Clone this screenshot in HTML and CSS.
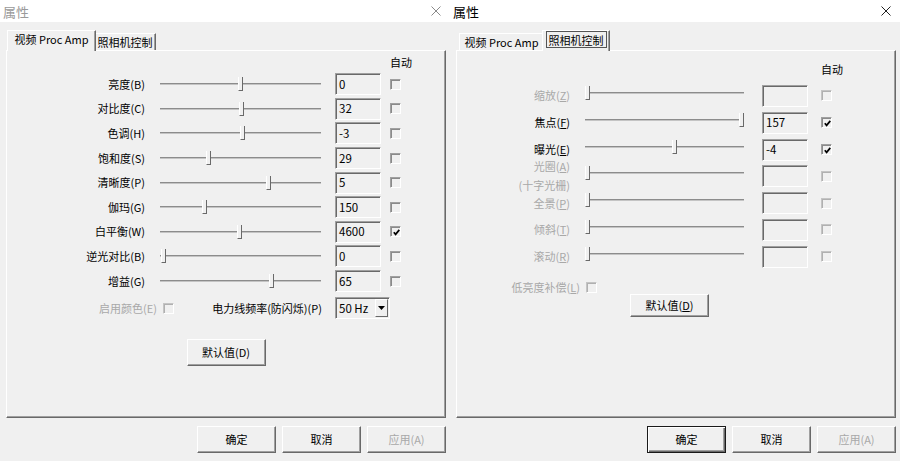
FILE: index.html
```html
<!DOCTYPE html>
<html lang="zh-CN">
<head>
    <meta charset="UTF-8">
    <meta name="viewport" content="width=device-width, initial-scale=1.0">
    <title>属性</title>
    <link rel="stylesheet" href="styles.css">
</head>
<body>
    <!-- 视频 Proc Amp page (inactive window) -->
    <div class="dialog video inactive">
        <div class="titlebar">
            <span class="title">属性</span>
            <svg class="close" width="10" height="10" viewBox="0 0 10 10"><path d="M0.5 0.5L9.5 9.5M9.5 0.5L0.5 9.5"/></svg>
        </div>
        <div class="tabs">
            <div class="tab tab-video selected">视频 Proc Amp</div>
            <div class="tab tab-camera">照相机控制</div>
        </div>
        <div class="panel">
            <div class="auto-head">自动</div>
            <div class="row">
                <span class="label">亮度(B)</span>
                <div class="slider"><span class="thumb" style="left:78px"></span></div>
                <div class="edit">0</div>
                <span class="check"></span>
            </div>
            <div class="row">
                <span class="label">对比度(C)</span>
                <div class="slider"><span class="thumb" style="left:79px"></span></div>
                <div class="edit">32</div>
                <span class="check"></span>
            </div>
            <div class="row">
                <span class="label">色调(H)</span>
                <div class="slider"><span class="thumb" style="left:80px"></span></div>
                <div class="edit">-3</div>
                <span class="check"></span>
            </div>
            <div class="row">
                <span class="label">饱和度(S)</span>
                <div class="slider"><span class="thumb" style="left:46px"></span></div>
                <div class="edit">29</div>
                <span class="check"></span>
            </div>
            <div class="row">
                <span class="label">清晰度(P)</span>
                <div class="slider"><span class="thumb" style="left:106px"></span></div>
                <div class="edit">5</div>
                <span class="check"></span>
            </div>
            <div class="row">
                <span class="label">伽玛(G)</span>
                <div class="slider"><span class="thumb" style="left:42px"></span></div>
                <div class="edit">150</div>
                <span class="check"></span>
            </div>
            <div class="row">
                <span class="label">白平衡(W)</span>
                <div class="slider"><span class="thumb" style="left:77px"></span></div>
                <div class="edit">4600</div>
                <span class="check on"><svg viewBox="0 0 7 7"><path d="M0.8 3.2L2.6 5.4L6.3 0.9"/></svg></span>
            </div>
            <div class="row">
                <span class="label">逆光对比(B)</span>
                <div class="slider"><span class="thumb" style="left:1px"></span></div>
                <div class="edit">0</div>
                <span class="check"></span>
            </div>
            <div class="row">
                <span class="label">增益(G)</span>
                <div class="slider"><span class="thumb" style="left:109px"></span></div>
                <div class="edit">65</div>
                <span class="check"></span>
            </div>
            <div class="row misc">
                <span class="label label-a off">启用颜色(E)</span>
                <span class="check off"></span>
                <span class="label label-b">电力线频率(防闪烁)(P)</span>
                <div class="combo">
                    <span>50 Hz</span>
                    <span class="drop"><svg width="7" height="4" viewBox="0 0 7 4"><path d="M0 0H7L3.5 4Z"/></svg></span>
                </div>
            </div>
            <div class="btn defaults">默认值(D)</div>
        </div>
        <div class="actions">
            <div class="btn">确定</div>
            <div class="btn">取消</div>
            <div class="btn off">应用(A)</div>
        </div>
    </div>

    <!-- 照相机控制 page (active window) -->
    <div class="dialog camera">
        <div class="titlebar">
            <span class="title">属性</span>
            <svg class="close" width="10" height="10" viewBox="0 0 10 10"><path d="M0.5 0.5L9.5 9.5M9.5 0.5L0.5 9.5"/></svg>
        </div>
        <div class="tabs">
            <div class="tab tab-video">视频 Proc Amp</div>
            <div class="tab tab-camera selected"><span class="focus">照相机控制</span></div>
        </div>
        <div class="panel">
            <div class="auto-head">自动</div>
            <div class="row">
                <span class="label off">缩放(<u>Z</u>)</span>
                <div class="slider"><span class="thumb" style="left:0px"></span></div>
                <div class="edit"></div>
                <span class="check off"></span>
            </div>
            <div class="row">
                <span class="label">焦点(<u>F</u>)</span>
                <div class="slider"><span class="thumb" style="left:154px"></span></div>
                <div class="edit">157</div>
                <span class="check on"><svg viewBox="0 0 7 7"><path d="M0.8 3.2L2.6 5.4L6.3 0.9"/></svg></span>
            </div>
            <div class="row">
                <span class="label">曝光(<u>E</u>)</span>
                <div class="slider"><span class="thumb" style="left:87px"></span></div>
                <div class="edit">-4</div>
                <span class="check on"><svg viewBox="0 0 7 7"><path d="M0.8 3.2L2.6 5.4L6.3 0.9"/></svg></span>
            </div>
            <div class="row">
                <span class="label off two-line">光圈(<u>A</u>)<br>(十字光栅)</span>
                <div class="slider"><span class="thumb" style="left:0px"></span></div>
                <div class="edit"></div>
                <span class="check off"></span>
            </div>
            <div class="row">
                <span class="label off">全景(<u>P</u>)</span>
                <div class="slider"><span class="thumb" style="left:0px"></span></div>
                <div class="edit"></div>
                <span class="check off"></span>
            </div>
            <div class="row">
                <span class="label off">倾斜(<u>T</u>)</span>
                <div class="slider"><span class="thumb" style="left:0px"></span></div>
                <div class="edit"></div>
                <span class="check off"></span>
            </div>
            <div class="row">
                <span class="label off">滚动(<u>R</u>)</span>
                <div class="slider"><span class="thumb" style="left:0px"></span></div>
                <div class="edit"></div>
                <span class="check off"></span>
            </div>
            <div class="row misc">
                <span class="label off">低亮度补偿(<u>L</u>)</span>
                <span class="check off"></span>
            </div>
            <div class="btn defaults">默认值(<u>D</u>)</div>
        </div>
        <div class="actions">
            <div class="btn default">确定</div>
            <div class="btn">取消</div>
            <div class="btn off">应用(A)</div>
        </div>
    </div>
</body>
</html>
```

FILE: styles.css
```css
* {
    box-sizing: border-box;
}
body {
    margin: 0;
    display: flex;
    font-family: "Noto Sans CJK SC", "Liberation Sans", sans-serif;
    font-size: 11px;
    line-height: 13px;
    color: #000;
    background: #f0f0f0;
}
u {
    text-decoration-thickness: 1px;
    text-underline-offset: 1px;
}
.off {
    color: #a8a8a8;
}

/* window frame */
.dialog {
    width: 450px;
    height: 461px;
    background: #f0f0f0;
}
.titlebar {
    height: 22px;
    background: #fff;
    display: flex;
    align-items: center;
    justify-content: space-between;
    padding: 0 9px 0 3px;
}
.title {
    font-size: 13px;
}
.inactive .title {
    color: #9a9a9a;
}
.close {
    fill: none;
    stroke: #222;
    stroke-width: 1;
}
.inactive .close {
    stroke: #8a8a8a;
}

/* tab strip */
.tabs {
    height: 28px;
    display: flex;
    align-items: flex-end;
    padding-left: 9px;
    position: relative;
    z-index: 1;
}
.tab {
    height: 17px;
    border-top: 1px solid #fff;
    border-left: 1px solid #fff;
    border-right: 1px solid #696969;
    box-shadow: inset -1px 0 #a0a0a0;
    background: #f0f0f0;
    display: flex;
    align-items: center;
    justify-content: center;
    white-space: nowrap;
}
.tab-video {
    width: 85px;
}
.tab-camera {
    width: 62px;
}
.tab.selected {
    height: 21px;
    margin: 0 -2px -1px;
    position: relative;
    z-index: 2;
    padding-bottom: 3px;
}
.tab-video.selected {
    width: 89px;
}
.tab-camera.selected {
    width: 68px;
}
.focus {
    border: 1px solid #555;
    padding: 1px 2px 0;
    line-height: 14px;
}

/* page area */
.panel {
    margin-left: 6px;
    width: 440px;
    height: 368px;
    border-top: 1px solid #fff;
    border-left: 1px solid #fff;
    border-right: 1px solid #696969;
    border-bottom: 1px solid #696969;
    box-shadow: inset -1px -1px #a0a0a0;
}
.row {
    display: flex;
    align-items: center;
}
.label {
    text-align: right;
    white-space: nowrap;
}
.slider {
    position: relative;
    height: 2px;
    border-top: 1px solid #8c8c8c;
    border-bottom: 1px solid #c4c4c4;
}
.thumb {
    position: absolute;
    top: -7px;
    width: 5px;
    height: 14px;
    background: #f0f0f0;
    border-left: 1px solid #fff;
    border-right: 1px solid #696969;
    border-bottom: 1px solid #696969;
}
.edit {
    width: 46px;
    height: 22px;
    border: 1px solid;
    border-color: #a0a0a0 #fff #fff #a0a0a0;
    box-shadow: inset 1px 1px #696969;
    padding-left: 3px;
    display: flex;
    align-items: center;
    font-size: 11.5px;
}
.check {
    width: 11px;
    height: 11px;
    flex: none;
    border: 1px solid;
    border-color: #a0a0a0 #fff #fff #a0a0a0;
    box-shadow: inset 1px 1px #8a8a8a;
    display: flex;
    align-items: center;
    justify-content: center;
}
.check.off {
    border-color: #c4c4c4 #fff #fff #c4c4c4;
    box-shadow: inset 1px 1px #b0b0b0;
}
.check svg {
    width: 7px;
    height: 7px;
    margin: 1px 0 0 1px;
    fill: none;
    stroke: #000;
    stroke-width: 1.7;
}

/* buttons */
.btn {
    width: 79px;
    height: 27px;
    background: #f0f0f0;
    border: 1px solid;
    border-color: #fff #696969 #696969 #fff;
    box-shadow: inset -1px -1px #a0a0a0;
    display: flex;
    align-items: center;
    justify-content: center;
}
.btn.default {
    border-color: #1a1a1a;
    box-shadow: inset 1px 1px #fff, inset -1px -1px #696969, inset -2px -2px #a0a0a0;
}
.actions {
    display: flex;
    justify-content: flex-end;
    gap: 6px;
    padding: 8px 4px 0 0;
}

/* 视频 Proc Amp page */
.video .auto-head {
    height: 21px;
    padding: 5px 0 0 383px;
}
.video .row {
    height: 24.6px;
}
.video .label {
    width: 138px;
}
.video .slider {
    width: 161px;
    margin-left: 15px;
}
.video .edit {
    margin-left: 14px;
}
.video .check {
    margin-left: 9px;
}
.video .misc {
    height: 28px;
    margin-top: 1px;
}
.video .label-a {
    width: 150px;
}
.video .misc .check {
    margin-left: 6px;
}
.video .label-b {
    width: 148px;
}
.combo {
    margin-left: 13px;
    width: 55px;
    height: 22px;
    border: 1px solid;
    border-color: #a0a0a0 #fff #fff #a0a0a0;
    box-shadow: inset 1px 1px #696969;
    display: flex;
    align-items: center;
    padding: 0 1px 0 3px;
    font-size: 11.5px;
}
.drop {
    margin-left: auto;
    width: 13px;
    height: 18px;
    border: 1px solid;
    border-color: #fff #696969 #696969 #fff;
    display: flex;
    align-items: center;
    justify-content: center;
}
.drop svg {
    fill: #000;
}
.video .defaults {
    margin: 17px auto 0;
}

/* 照相机控制 page */
.camera .auto-head {
    height: 31.6px;
    padding: 12px 0 0 364px;
}
.camera .row {
    height: 26.8px;
}
.camera .label {
    width: 113px;
}
.camera .two-line {
    line-height: 19px;
}
.camera .slider {
    width: 159px;
    margin-left: 15px;
    top: -3px;
}
.camera .edit {
    margin-left: 18px;
}
.camera .check {
    margin-left: 13px;
}
.camera .misc {
    height: 14px;
    margin-top: 10px;
}
.camera .misc .label {
    width: 123px;
}
.camera .misc .check {
    margin-left: 6px;
}
.camera .defaults {
    height: 23px;
    margin-left: 173px;
}
```
